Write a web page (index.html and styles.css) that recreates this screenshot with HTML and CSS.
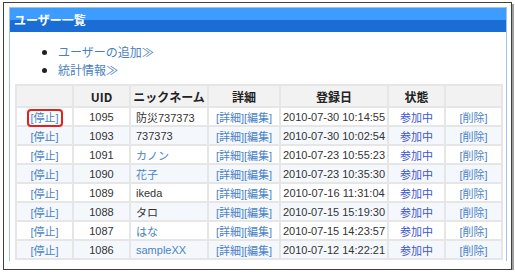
FILE: index.html
```html
<!DOCTYPE html>
<html lang="ja">
<head>
<meta charset="utf-8">
<title>ユーザー一覧</title>
<link rel="stylesheet" href="styles.css">
</head>
<body>
<div class="frame">
  <div class="panel">
    <div class="panel-head">ユーザー一覧</div>
    <ul class="menu">
      <li><a href="#">ユーザーの追加≫</a></li>
      <li><a href="#">統計情報≫</a></li>
    </ul>
    <table class="users">
      <colgroup>
        <col class="c1"><col class="c2"><col class="c3"><col class="c4"><col class="c5"><col class="c6"><col class="c7">
      </colgroup>
      <thead>
        <tr><th></th><th>UID</th><th>ニックネーム</th><th>詳細</th><th>登録日</th><th>状態</th><th></th></tr>
      </thead>
      <tbody>
        <tr><td><a href="#" class="mark">[停止]</a></td><td>1095</td><td class="nick">防災737373</td><td><a href="#">[詳細]</a><a href="#">[編集]</a></td><td>2010-07-30 10:14:55</td><td><a href="#" class="state">参加中</a></td><td><a href="#">[削除]</a></td></tr>
        <tr><td><a href="#">[停止]</a></td><td>1093</td><td class="nick">737373</td><td><a href="#">[詳細]</a><a href="#">[編集]</a></td><td>2010-07-30 10:02:54</td><td><a href="#" class="state">参加中</a></td><td><a href="#">[削除]</a></td></tr>
        <tr><td><a href="#">[停止]</a></td><td>1091</td><td class="nick"><a href="#">カノン</a></td><td><a href="#">[詳細]</a><a href="#">[編集]</a></td><td>2010-07-23 10:55:23</td><td><a href="#" class="state">参加中</a></td><td><a href="#">[削除]</a></td></tr>
        <tr><td><a href="#">[停止]</a></td><td>1090</td><td class="nick"><a href="#">花子</a></td><td><a href="#">[詳細]</a><a href="#">[編集]</a></td><td>2010-07-23 10:35:30</td><td><a href="#" class="state">参加中</a></td><td><a href="#">[削除]</a></td></tr>
        <tr><td><a href="#">[停止]</a></td><td>1089</td><td class="nick">ikeda</td><td><a href="#">[詳細]</a><a href="#">[編集]</a></td><td>2010-07-16 11:31:04</td><td><a href="#" class="state">参加中</a></td><td><a href="#">[削除]</a></td></tr>
        <tr><td><a href="#">[停止]</a></td><td>1088</td><td class="nick">タロ</td><td><a href="#">[詳細]</a><a href="#">[編集]</a></td><td>2010-07-15 15:19:30</td><td><a href="#" class="state">参加中</a></td><td><a href="#">[削除]</a></td></tr>
        <tr><td><a href="#">[停止]</a></td><td>1087</td><td class="nick"><a href="#">はな</a></td><td><a href="#">[詳細]</a><a href="#">[編集]</a></td><td>2010-07-15 14:23:57</td><td><a href="#" class="state">参加中</a></td><td><a href="#">[削除]</a></td></tr>
        <tr><td><a href="#">[停止]</a></td><td>1086</td><td class="nick"><a href="#">sampleXX</a></td><td><a href="#">[詳細]</a><a href="#">[編集]</a></td><td>2010-07-12 14:22:21</td><td><a href="#" class="state">参加中</a></td><td><a href="#">[削除]</a></td></tr>
      </tbody>
    </table>
  </div>
</div>
</body>
</html>
```

FILE: styles.css
```css
html, body {
  margin: 0;
  padding: 0;
  background: #fff;
}
body {
  font-family: "Liberation Sans", "Noto Sans CJK JP", sans-serif;
  color: #333;
}
a {
  color: #4a82c6;
  text-decoration: none;
}
.frame {
  margin: 2px 0 0 3px;
  width: 509px;
  height: 268px;
  border: 1px solid #404040;
  box-shadow: 2px 2px 0 #a0a0a0;
  background: #fff;
  padding: 4px 4px 0 5px;
  box-sizing: border-box;
}
.panel {
  height: 254px;
  overflow: hidden;
  border: 1px solid #9cc4ec;
  border-bottom: none;
  box-sizing: border-box;
}
.panel-head {
  height: 24px;
  line-height: 24px;
  padding-left: 4px;
  font-family: "Noto Sans CJK JP", sans-serif;
  font-size: 12px;
  font-weight: bold;
  color: #fff;
  background: linear-gradient(#3d9cff 0, #3d9cff 50%, #1a6dd4 50%, #1a6dd4 100%);
}
.menu {
  margin: 11px 0 0 0;
  padding-left: 48px;
  font-family: "Noto Sans CJK JP", sans-serif;
  font-size: 12px;
  line-height: 17.5px;
}
.menu li {
  color: #222;
}
.menu a {
  color: #4a7fc0;
}
.users {
  margin: 6px 0 0 5px;
  width: 486px;
  table-layout: fixed;
  border-collapse: collapse;
  font-size: 11px;
}
.c1 { width: 57px; }
.c2 { width: 57px; }
.c3 { width: 78px; }
.c4 { width: 72px; }
.c5 { width: 108px; }
.c6 { width: 57px; }
.c7 { width: 57px; }
.users th, .users td {
  border: 2px solid #e6e6e6;
  padding: 0;
  text-align: center;
  white-space: nowrap;
  vertical-align: middle;
}
.users th {
  height: 20px;
  background: #f2f2f2;
  font-family: "Noto Sans CJK JP", sans-serif;
  font-size: 12px;
  font-weight: bold;
  color: #222;
}
.users td {
  height: 17px;
  color: #333;
}
.users tbody tr:nth-child(even) td {
  background: #f4f8fd;
}
.users td.nick {
  text-align: left;
  padding-left: 5px;
}
.state {
  color: #3b55d4;
}
.mark {
  position: relative;
}
.mark::after {
  content: "";
  position: absolute;
  left: -3px;
  right: -4px;
  top: -3px;
  bottom: -3px;
  border: 2px solid #e8201c;
  border-radius: 4px;
}
```
